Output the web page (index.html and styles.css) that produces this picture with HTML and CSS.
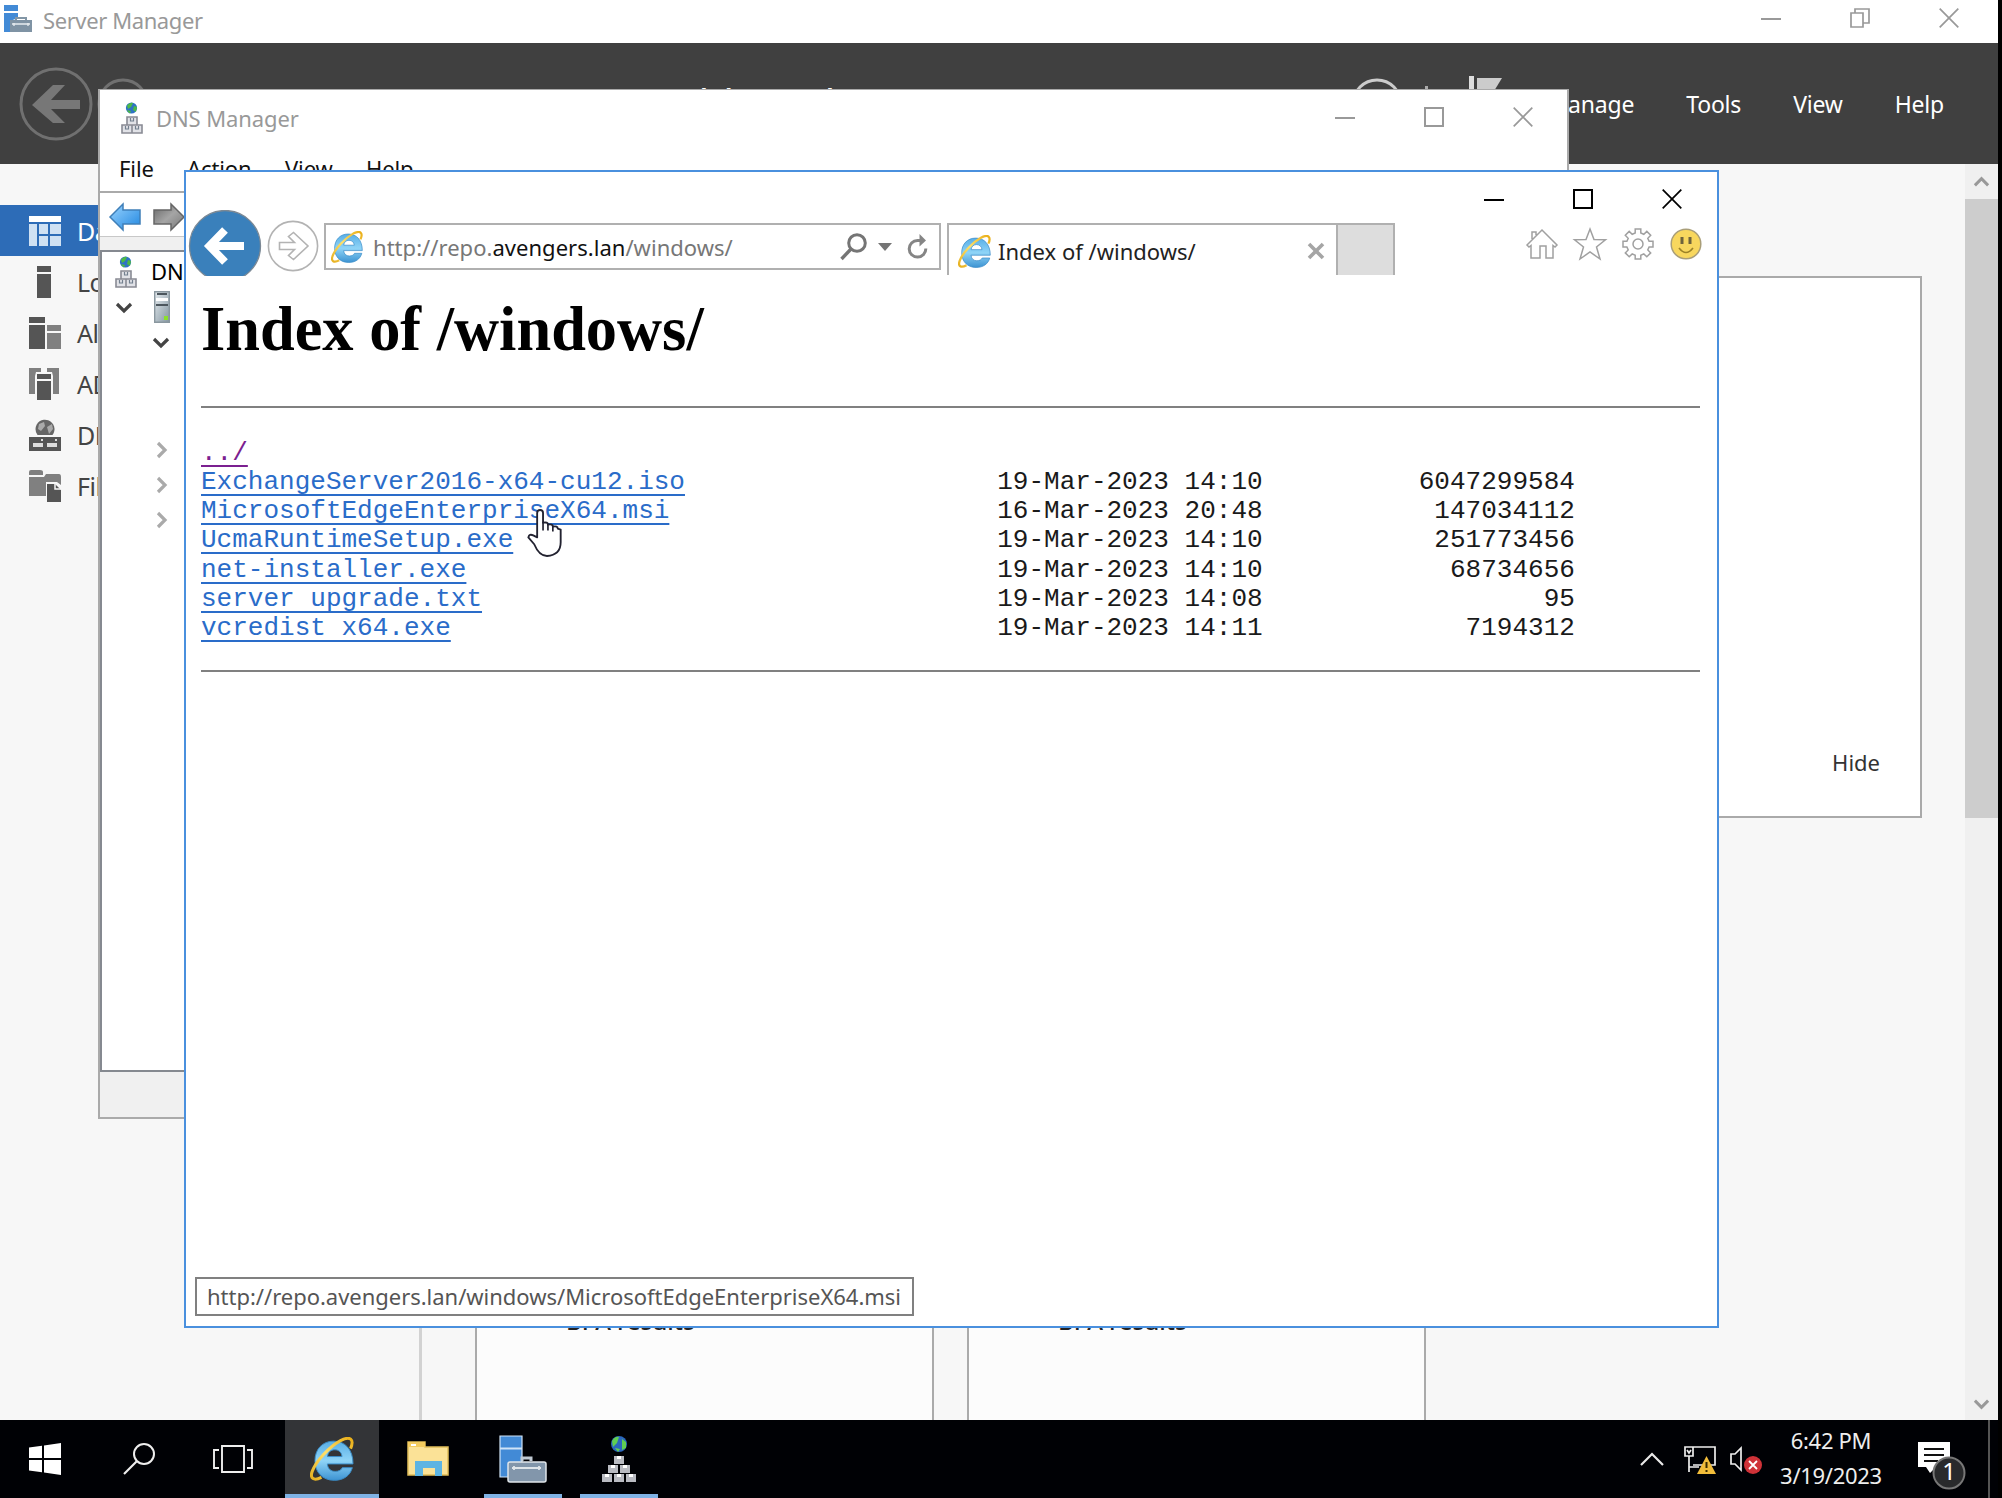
FILE: index.html
```html
<!DOCTYPE html>
<html lang="en">
<head>
<meta charset="utf-8">
<title>Index of /windows/</title>
<link rel="stylesheet" href="styles.css">
</head>
<body>
<svg class="defs" width="0" height="0" aria-hidden="true">
  <defs>
    <linearGradient id="ieBlue" x1="0" y1="0" x2="0" y2="1"><stop offset="0" stop-color="#58aee6"/><stop offset=".5" stop-color="#8fd4f7"/><stop offset="1" stop-color="#3d93d2"/></linearGradient>
    <linearGradient id="ieGold" x1="0" y1="1" x2="1" y2="0"><stop offset="0" stop-color="#e6b020"/><stop offset=".5" stop-color="#ffe06a"/><stop offset="1" stop-color="#e9ae18"/></linearGradient>
    <linearGradient id="arrowBlue" x1="0" y1="0" x2="1" y2="1"><stop offset="0" stop-color="#9ad4ff"/><stop offset="1" stop-color="#2187e0"/></linearGradient>
    <linearGradient id="arrowGray" x1="0" y1="0" x2="1" y2="1"><stop offset="0" stop-color="#666"/><stop offset=".5" stop-color="#a5a5a5"/><stop offset="1" stop-color="#777"/></linearGradient>
    <linearGradient id="tower" x1="0" y1="0" x2="1" y2="1"><stop offset="0" stop-color="#e5ebef"/><stop offset="1" stop-color="#8496a1"/></linearGradient>
  </defs>
  <symbol id="ie" viewBox="0 0 32 32">
    <path fill-rule="evenodd" d="M17.200 3C25.500 3 31.300 9 31.300 19.600H12.600C13 23.200 15.200 25 18.300 25c2.600 0 4.300-.9 5.200-2.700h7.300C29.200 28.200 24.300 31.500 17.600 31.500 9.200 31.500 3.600 25.700 3.600 17.300S9 3 17.200 3zM12.700 14.200h10.600C22.900 11 20.900 9.300 18 9.300s-4.900 1.700-5.300 4.900z" fill="url(#ieBlue)" stroke="#3a8cc8" stroke-width=".7"/>
    <path d="M29.500 8.400C32.400 1.500 29.300-1 22.200 2.600 13.800 7.200 4.400 17.600 1.600 25-.3 30.400 2.900 32.100 8.300 29.300" fill="none" stroke="url(#ieGold)" stroke-width="2.200"/>
  </symbol>
  <symbol id="dns" viewBox="0 0 22 32">
    <circle cx="10.500" cy="6" r="5.600" fill="#2f73c4"/>
    <path d="M6 3.500Q9 0 12 1l-2 4-3 2zM13 4l3 1-1 5-3-2zM6 8l4 1-1 2.500Q7 11 6 8z" fill="#4dba45"/>
    <path d="M6 15h10v8H6zM1 23h10v8H1zM11 23h10v8H11z" fill="#e1e2e7" stroke="#898b94" stroke-width="1.600"/>
    <path d="M9.500 16v3h3v-3M4.500 24v3h3v-3M14.500 24v3h3v-3" fill="none" stroke="#73808f" stroke-width="1.200"/>
  </symbol>
  <symbol id="toolbox" viewBox="0 0 48 48">
    <path d="M1 1h22v12H1zM1 14h22v28H1z" fill="#428ad6" stroke="#cfe3f7" stroke-width="1.200"/>
    <path d="M23 26v-3h9v3" fill="none" stroke="#bfc9d3" stroke-width="3"/>
    <rect x="9" y="27" width="38" height="20" rx="2" fill="#8296ab" stroke="#dfe5ea" stroke-width="1.500"/>
    <path d="M13 33h29M15 31v4M40 31v4" stroke="#dfe5ea" stroke-width="1.800"/>
  </symbol>
  <symbol id="close" viewBox="0 0 20 20"><path d="M.7.7l18.600 18.600M19.300.7L.7 19.300" fill="none" stroke="currentColor" stroke-width="1.700"/></symbol>
  <symbol id="max" viewBox="0 0 20 20"><path d="M1 1h18v18H1z" fill="none" stroke="currentColor" stroke-width="2"/></symbol>
  <symbol id="min" viewBox="0 0 20 20"><path d="M0 11h20" stroke="currentColor" stroke-width="2"/></symbol>
  <symbol id="chevron" viewBox="0 0 18 18"><path d="M2 6l7 7 7-7" fill="none" stroke="currentColor" stroke-width="3.200"/></symbol>
</svg>

<main class="desktop">
  <section class="server-manager">
    <header class="sm-title">
      <svg class="sm-logo" viewBox="0 0 28 28"><path d="M0 0h14v6H0zM0 8h14v5l-8 3v11H0z" fill="#428ad6"/><path d="M12 15v-2h10v2" fill="none" stroke="#8296a6" stroke-width="2"/><path d="M6 15h22v12H6z" fill="#7f93a4"/><path d="M8 19h18M10 18v3M24 18v3" stroke="#e8edf0" stroke-width="1.300"/></svg>
      <span class="sm-name">Server Manager</span>
      <div class="controls">
        <svg><use href="#min"/></svg>
        <svg viewBox="0 0 20 20"><path d="M1 5h12v14H1zM5 5V1h14v14h-6" fill="none" stroke="currentColor" stroke-width="1.700"/></svg>
        <svg><use href="#close"/></svg>
      </div>
    </header>
    <div class="sm-header">
      <svg class="sm-back" viewBox="0 0 74 74"><circle cx="37" cy="37" r="35" fill="none" stroke="#707070" stroke-width="3"/><path d="M13 38L34 18h12L32 33h29v9H32l14 14H34z" fill="#777"/></svg>
      <svg class="sm-forward" viewBox="0 0 52 52"><circle cx="26" cy="26" r="24" fill="none" stroke="#707070" stroke-width="3"/></svg>
      <span class="sm-crumb">Dashboard</span>
      <svg class="sm-refresh" viewBox="0 0 52 52"><circle cx="26" cy="26" r="24" fill="none" stroke="#ccc" stroke-width="3"/></svg>
      <span class="sm-divider"></span>
      <svg class="sm-flag" viewBox="0 0 34 56"><path d="M0 0h5v56H0z" fill="#ddd"/><path d="M8 2h25L22 20H8z" fill="#ccc"/></svg>
      <nav class="sm-menu"><span>Manage</span><span>Tools</span><span>View</span><span>Help</span></nav>
    </div>
    <div class="sm-body">
      <nav class="sidebar">
        <div class="side-item selected"><svg viewBox="0 0 32 32"><path d="M0 1h32v6H0z" fill="#fff"/><path d="M0 9h8v22H0zM10 9h9v10h-9zM21 9h11v10H21zM10 21h9v10h-9zM21 21h11v10H21z" fill="#cfe1f3"/></svg><span>Dashboard</span></div>
        <div class="side-item"><svg viewBox="0 0 32 32"><path d="M8 0h14v6H8zM8 8h14v24H8z" fill="#555"/></svg><span>Local Server</span></div>
        <div class="side-item"><svg viewBox="0 0 32 32"><path d="M0 0h16v6H0zM0 8h16v24H0z" fill="#555"/><path d="M18 8h14v6H18zM18 16h14v16H18z" fill="#808080"/></svg><span>All Servers</span></div>
        <div class="side-item"><svg viewBox="0 0 32 32"><path d="M0 0h12v4H7l-1 4v18H0zM18 0h12v26h-6V8l-1-4h-5z" fill="#808080"/><path d="M8 6h14v5H8zM8 13h14v19H8z" fill="#555"/></svg><span>AD DS</span></div>
        <div class="side-item"><svg viewBox="0 0 32 32"><path d="M6.500 10a9.500 9.500 0 1 1 17 6h-15a9.500 9.500 0 0 1-2-6z" fill="#666"/><path d="M10 5l5-2 1 4-4 5-3-2zM18 8l5-3 1 5-4 5z" fill="#aaa"/><path d="M0 18h32v14H0z" fill="#555"/><path d="M4 24h10v4H4zM18 24h10v4H18zM12 20h2v2h-2zM26 20h2v2h-2z" fill="#ddd"/></svg><span>DNS</span></div>
        <div class="side-item"><svg viewBox="0 0 32 32"><path d="M0 5V2q0-2 2-2h9q3 0 3 2v3zM0 7h15l2-3h13q2 0 2 3v8l-4-3H17v14H0z" fill="#808080"/><path d="M18 14h8l6 6v12H18z" fill="#555"/><path d="M26 13v6h6" fill="none" stroke="#f7f7f7" stroke-width="1.500"/></svg><span>File and Storage Services</span></div>
      </nav>
      <div class="sm-content">
        <div class="welcome"><span>Hide</span></div>
        <div class="tiles">
          <div class="tile">BPA results</div>
          <div class="tile">BPA results</div>
        </div>
      </div>
      <div class="scrollbar">
        <svg class="flip" viewBox="0 0 18 18"><use href="#chevron"/></svg>
        <div class="thumb"></div>
        <svg viewBox="0 0 18 18"><use href="#chevron"/></svg>
      </div>
    </div>
  </section>

  <section class="dns-window">
    <header class="dns-title">
      <svg class="dns-icon"><use href="#dns"/></svg>
      <span class="dns-name">DNS Manager</span>
      <div class="controls">
        <svg><use href="#min"/></svg><svg><use href="#max"/></svg><svg><use href="#close"/></svg>
      </div>
    </header>
    <nav class="dns-menu"><span class="m-file">File</span><span class="m-action">Action</span><span class="m-view">View</span><span>Help</span></nav>
    <div class="dns-tools">
      <svg viewBox="0 0 32 28"><path d="M1 14L14 1v6h17v14H14v6z" fill="url(#arrowBlue)" stroke="#3f7fb8" stroke-width="1.500"/></svg>
      <svg viewBox="0 0 32 28"><path d="M31 14L18 1v6H1v14h17v6z" fill="url(#arrowGray)" stroke="#666" stroke-width="1.500"/></svg>
    </div>
    <div class="dns-tree">
      <div class="tree-row root"><svg class="dns-icon"><use href="#dns"/></svg><span>DNS</span></div>
      <div class="tree-row host"><svg class="chev"><use href="#chevron"/></svg><svg class="tower" viewBox="0 0 16 32"><path d="M.7.7h14.600v30.600H.7z" fill="url(#tower)" stroke="#8a979f" stroke-width="1.400"/><path d="M3 3h10M2 14h12" stroke="#4c565d" stroke-width="2"/><path d="M2 8.500h12" stroke="#fff" stroke-width="3"/><path d="M10 25h4v4h-4z" fill="#8be02c"/></svg></div>
      <div class="tree-row zone"><svg class="chev"><use href="#chevron"/></svg></div>
      <div class="tree-row leaf first"><svg class="chev"><use href="#chevron"/></svg></div>
      <div class="tree-row leaf"><svg class="chev"><use href="#chevron"/></svg></div>
      <div class="tree-row leaf"><svg class="chev"><use href="#chevron"/></svg></div>
    </div>
  </section>

  <section class="browser">
    <header class="browser-title">
      <div class="controls">
        <svg><use href="#min"/></svg><svg><use href="#max"/></svg><svg><use href="#close"/></svg>
      </div>
    </header>
    <div class="browser-bar">
      <svg class="back" viewBox="0 0 74 66"><circle cx="37" cy="36" r="35.500" fill="#3a80bb" stroke="#7b8894" stroke-width="1.300"/><path d="M56 36H22M37 20L21.500 36 37 52" fill="none" stroke="#fff" stroke-width="8"/></svg>
      <svg class="forward" viewBox="0 0 52 52"><circle cx="26" cy="26" r="24.600" fill="#fff" stroke="#b3b3b3" stroke-width="1.600"/><path d="M12.500 22.500h15l-6-6 5-4L41 26 26.500 39.500l-5-4 6-6h-15z" fill="none" stroke="#b3b3b3" stroke-width="1.600"/></svg>
      <div class="address">
        <svg class="ie"><use href="#ie"/></svg>
        <span class="url">http://repo.<b>avengers.lan</b>/windows/</span>
        <svg class="search" viewBox="0 0 28 28"><circle cx="17" cy="10" r="8.300" fill="none" stroke="#757575" stroke-width="3"/><path d="M11 16L1.500 26" stroke="#757575" stroke-width="3.400"/></svg>
        <svg class="drop" viewBox="0 0 14 8"><path d="M0 0h14L7 8z" fill="#757575"/></svg>
        <svg class="reload" viewBox="0 0 22 26"><path d="M18.800 14.500A8.300 8.300 0 1 1 10.500 6.500H14" fill="none" stroke="#858585" stroke-width="3"/><path d="M12.500 0l6.500 6.500-6.500 6z" fill="#858585"/></svg>
      </div>
      <div class="tab">
        <svg class="ie"><use href="#ie"/></svg>
        <span>Index of /windows/</span>
        <svg class="tab-close" viewBox="0 0 18 18"><path d="M2 2l14 14M16 2L2 16" stroke="#a5a5a5" stroke-width="3.600"/></svg>
      </div>
      <div class="new-tab"></div>
      <div class="tools">
        <svg viewBox="0 0 32 32"><path d="M1 17L16 2l15 15-2 2-2-1.500V30h-7V18h-6v12H5V17.500L3 19zM6 11V4h4v3" fill="none" stroke="#a0a0a0" stroke-width="1.500"/></svg>
        <svg viewBox="0 0 32 32"><path d="M16 1l4 10.500 11.500.3-9 7.200L26 31l-10-7-10 7 3.500-12L.5 11.800l11.500-.3z" fill="none" stroke="#a0a0a0" stroke-width="1.500"/></svg>
        <svg viewBox="0 0 32 32"><path d="M13.200 1h5.600v4l3 1.300 3-2.900 3.900 3.900-2.900 3 1.300 3H31v5.600h-3.900l-1.300 3 2.900 3-3.900 3.900-3-2.900-3 1.300V31h-5.600v-3.800l-3-1.300-3 2.900-3.900-3.900 2.900-3-1.300-3H1v-5.600h3.900l1.300-3-2.900-3 3.900-3.900 3 2.900 3-1.300z" fill="none" stroke="#a0a0a0" stroke-width="1.500"/><circle cx="16" cy="16" r="5" fill="none" stroke="#a0a0a0" stroke-width="1.500"/></svg>
        <svg viewBox="0 0 32 32"><circle cx="16" cy="16" r="14.800" fill="#f8d75e" stroke="#a99e79" stroke-width="1.500"/><path d="M12 9v7M20 9v7" stroke="#6e633c" stroke-width="3"/><path d="M9 20q7 9 14 0" fill="none" stroke="#9c8228" stroke-width="1.600"/></svg>
      </div>
    </div>
    <article class="page">
      <h1>Index of /windows/</h1>
      <hr>
<pre><a class="visited">../</a>
<a>ExchangeServer2016-x64-cu12.iso</a>                    19-Mar-2023 14:10          6047299584
<a>MicrosoftEdgeEnterpriseX64.msi</a>                     16-Mar-2023 20:48           147034112
<a>UcmaRuntimeSetup.exe</a>                               19-Mar-2023 14:10           251773456
<a>net-installer.exe</a>                                  19-Mar-2023 14:10            68734656
<a>server upgrade.txt</a>                                 19-Mar-2023 14:08                  95
<a>vcredist x64.exe</a>                                   19-Mar-2023 14:11             7194312
</pre>
      <hr>
    </article>
    <div class="status">http://repo.avengers.lan/windows/MicrosoftEdgeEnterpriseX64.msi</div>
  </section>

  <svg class="cursor" viewBox="0 0 36 50"><path d="M10 30V5q0-3 3-3t3 3v10q5-1 5 2 5-1 5 2 5-1 5 2l3 1v13q0 13-14 14-8 0-13-12L1 30q1-4 5-2z" fill="#fff" stroke="#222230" stroke-width="1.900" stroke-linejoin="round"/><path d="M16 14v9M21 16v7M26 18v6" stroke="#222230" stroke-width="1.700"/></svg>

  <footer class="taskbar">
    <div class="task"><svg class="win" viewBox="0 0 32 32"><path d="M0 4.500L13 2.700V15H0zM15 2.400L32 0v15H15zM0 17h13v12.300L0 27.500zM15 17h17v15l-17-2.400z" fill="#fff"/></svg></div>
    <div class="task"><svg class="find" viewBox="0 0 32 32"><circle cx="21" cy="11" r="10" fill="none" stroke="#eee" stroke-width="2"/><path d="M14 18L1 31" stroke="#eee" stroke-width="2.200"/></svg></div>
    <div class="task"><svg class="view" viewBox="0 0 40 28"><path d="M9 1h22v26H9zM6 5H1v18h5M34 5h5v18h-5" fill="none" stroke="#eee" stroke-width="1.900"/></svg></div>
    <div class="task active"><svg class="big-ie"><use href="#ie"/></svg></div>
    <div class="task"><svg class="folder" viewBox="0 0 42 36"><path d="M1 1h17v5h23v28H1z" fill="#fbe297" stroke="#e0bd5a" stroke-width="1.500"/><path d="M1 1h17v5H1z" fill="#f3cb5f"/><path d="M4 3h5v2H4z" fill="#fff"/><path d="M8 20h27v15h-7v-8H16v8H8z" fill="#5db4e3"/></svg></div>
    <div class="task running"><svg class="kit"><use href="#toolbox"/></svg></div>
    <div class="task running"><svg class="pyramid" viewBox="0 0 36 46"><circle cx="18" cy="8" r="8" fill="#2b67bd"/><path d="M11 5q3-5 7-4l-2 6-4 4zM21 3l4 3v6l-4 2zM14 12l5 1-2 3z" fill="#60cf51"/><path d="M13 20h10v8H13zM7 29h10v8H7zM19 29h10v8H19zM1 38h10v8H1zM13 38h10v8H13zM25 38h10v8H25z" fill="#b9bbc2"/><path d="M16 20v3h4v-3M10 29v3h4v-3M22 29v3h4v-3M4 38v3h4v-3M16 38v3h4v-3M28 38v3h4v-3" fill="#fff"/></svg></div>
    <div class="tray">
      <svg class="up" viewBox="0 0 24 14"><path d="M1 13L12 2l11 11" fill="none" stroke="#e8e8e8" stroke-width="2.200"/></svg>
      <svg class="net" viewBox="0 0 32 28"><path d="M9 1h22v18H9M1 1h8v9H1zM5 10v16M5 21h10M3 4l2 3 2-3" fill="none" stroke="#eee" stroke-width="1.700"/><path d="M22.500 10L32 28H13z" fill="#f2bd3a"/><path d="M22.500 16v6M22.500 24v2" stroke="#3a2c00" stroke-width="2"/></svg>
      <svg class="vol" viewBox="0 0 32 28"><path d="M1 8h4l6-6v22l-6-6H1z" fill="none" stroke="#eee" stroke-width="1.700"/><circle cx="23" cy="19" r="9" fill="#cf3238"/><path d="M19 15l8 8M27 15l-8 8" stroke="#fff" stroke-width="1.800"/></svg>
      <div class="clock"><span>6:42 PM</span><span>3/19/2023</span></div>
      <div class="notice">
        <svg viewBox="0 0 48 48"><path d="M0 0h32v25H18l-6 6-4-6H0z" fill="#fff"/><path d="M6 7h20M6 13h20M6 19h14" stroke="#111" stroke-width="2"/><circle cx="31" cy="31" r="15.500" fill="#292a2c" stroke="#777" stroke-width="2"/></svg>
        <span>1</span>
      </div>
    </div>
  </footer>
</main>
</body>
</html>
```
FILE: styles.css
```css
* { box-sizing: border-box; }

body {
  margin: 0;
  background: #000;
  font-family: "Noto Sans", "Open Sans", sans-serif;
  font-size: 22px;
  overflow: hidden;
}

svg { display: block; flex: none; overflow: visible; }
.defs { position: absolute; }

.desktop {
  position: relative;
  width: 2002px;
  height: 1498px;
  overflow: hidden;
  white-space: nowrap;
}

.controls { display: flex; gap: 69px; margin-left: auto; color: #999; }
.controls svg { width: 20px; height: 20px; }

/* Server Manager */
.server-manager {
  position: absolute;
  left: 0;
  top: 0;
  width: 1998px;
  height: 1420px;
  display: flex;
  flex-direction: column;
  background: #f7f7f7;
}
.sm-title {
  height: 43px;
  display: flex;
  align-items: flex-start;
  padding: 5px 39px 0 4px;
  background: #fff;
}
.sm-logo { width: 28px; height: 28px; }
.sm-name { margin-left: 11px; line-height: 31px; color: #999; letter-spacing: -0.4px; }
.sm-title .controls { padding-top: 3px; }
.sm-header {
  height: 121px;
  display: flex;
  align-items: center;
  background: #404040;
  padding: 0 54px 0 19px;
}
.sm-back { width: 74px; height: 74px; }
.sm-forward { width: 52px; height: 52px; margin-left: 4px; }
.sm-crumb { width: 723px; margin: 0 0 1px 479px; font-size: 40px; line-height: 54px; color: #fff; }
.sm-refresh { width: 52px; height: 52px; }
.sm-divider { width: 3px; height: 36px; margin-left: 22px; background: #aaa; }
.sm-flag { width: 34px; height: 56px; margin-left: 41px; }
.sm-menu { display: flex; gap: 52px; margin-left: auto; padding-top: 1px; color: #fff; font-size: 23px; }
.sm-menu span { letter-spacing: -0.2px; }
.sm-body { flex: 1; display: flex; min-height: 0; }

.sidebar { width: 422px; padding-top: 41px; border-right: 3px solid #d2d2d2; }
.side-item {
  height: 51px;
  display: flex;
  align-items: center;
  gap: 16px;
  padding-left: 29px;
  font-size: 25px;
  letter-spacing: -0.5px;
  color: #444;
}
.side-item svg { width: 32px; height: 32px; }
.side-item.selected { background: #2d6cb7; color: #fff; }

.sm-content { flex: 1; display: flex; flex-direction: column; padding: 112px 43px 0 53px; }
.welcome {
  height: 542px;
  display: flex;
  justify-content: flex-end;
  align-items: flex-end;
  padding: 0 40px 39px;
  background: #fff;
  border: 2px solid #aaa;
  color: #333;
}
.tiles { flex: 1; display: flex; gap: 33px; padding-top: 480px; }
.tile {
  width: 459px;
  padding: 0 0 0 89px;
  background: #fcfcfc;
  border: solid #aaa;
  border-width: 0 2px;
  line-height: 46px;
  font-size: 24px;
  font-weight: 500;
  color: #222;
}

.scrollbar {
  width: 33px;
  display: flex;
  flex-direction: column;
  align-items: center;
  padding: 10px 0 8px;
  background: #f0f0f0;
  color: #999;
}
.scrollbar svg { width: 17px; height: 17px; }
.scrollbar svg:last-child { margin-top: auto; }
.flip { transform: scaleY(-1); }
.thumb { width: 33px; height: 619px; margin-top: 8px; background: #cdcdcd; }

/* DNS Manager */
.dns-window {
  position: absolute;
  left: 98px;
  top: 89px;
  width: 1471px;
  height: 1030px;
  display: flex;
  flex-direction: column;
  padding-bottom: 45px;
  background: #f0f0f0;
  border: 2px solid #aaa;
  border-top-width: 1px;
}
.dns-title {
  height: 60px;
  display: flex;
  align-items: flex-start;
  padding: 12px 34px 0 21px;
  background: #fff;
}
.dns-icon { width: 22px; height: 32px; }
.dns-name { margin-left: 13px; line-height: 33px; color: #999; letter-spacing: -0.1px; }
.dns-title .controls { padding-top: 5px; }
.dns-menu {
  height: 43px;
  display: flex;
  padding-left: 19px;
  background: #fff;
  border-bottom: 2px solid #aaa;
  line-height: 37px;
  color: #111;
  letter-spacing: -0.1px;
}
.m-file { width: 68px; }
.m-action { width: 98px; }
.m-view { width: 81px; }
.dns-tools {
  height: 44px;
  display: flex;
  align-items: center;
  gap: 12px;
  padding: 4px 0 0 9px;
  background: #fff;
  border-bottom: 1px solid #c8c8c8;
}
.dns-tools svg { width: 32px; height: 28px; }
.dns-tree {
  flex: 1;
  margin-top: 13px;
  background: #fff;
  border: 2px solid #858990;
}
.tree-row { display: flex; align-items: center; height: 35px; }
.tree-row.root { gap: 14px; padding: 2px 0 0 13px; height: 37px; }
.tree-row.root span { padding-bottom: 2px; }
.tree-row.host { gap: 21px; padding-left: 13px; }
.tree-row.zone { padding-left: 50px; }
.tree-row.first { margin-top: 73px; }
.tree-row.leaf { padding-left: 50px; }
.chev { width: 18px; height: 18px; color: #444; }
.leaf .chev { color: #aaa; transform: rotate(-90deg); }
.tower { width: 16px; height: 32px; }

/* Browser */
.browser {
  position: absolute;
  left: 184px;
  top: 170px;
  width: 1535px;
  height: 1158px;
  display: flex;
  flex-direction: column;
  background: #fff;
  border: 2px solid #4a90de;
}
.browser-title { display: flex; height: 38px; padding: 17px 35px 0 0; }
.browser-title .controls { color: #000; }
.browser-bar { height: 65px; display: flex; align-items: flex-start; }
.back { width: 74px; height: 66px; margin-left: 2px; overflow: hidden; }
.forward { width: 52px; height: 52px; margin: 10px 0 0 5px; }
.address {
  width: 617px;
  height: 47px;
  margin: 13px 0 0 5px;
  display: flex;
  align-items: center;
  border: 2px solid #b0b0b0;
  padding: 0 10px 0 5px;
}
.address .ie { width: 32px; height: 32px; }
.url { margin-left: 10px; color: #777; letter-spacing: 0.03px; }
.url b { font-weight: 400; color: #111; }
.search { width: 28px; height: 28px; margin-left: auto; }
.drop { width: 14px; height: 8px; margin-left: 10px; }
.reload { width: 22px; height: 26px; margin-left: 15px; }
.tab {
  width: 391px;
  height: 52px;
  margin: 13px 0 0 6px;
  display: flex;
  align-items: center;
  padding: 2px 11px 0 9px;
  border: 2px solid #b0b0b0;
  border-bottom: 0;
  color: #222;
}
.tab .ie { width: 33px; height: 33px; margin-right: 7px; }
.tab-close { width: 18px; height: 18px; margin-left: auto; }
.new-tab {
  width: 57px;
  height: 52px;
  margin-top: 13px;
  background: #ddd;
  border: 2px solid #b0b0b0;
  border-width: 2px 2px 0 0;
}
.tools { display: flex; gap: 16px; margin: 18px 15px 0 auto; }
.tools svg { width: 32px; height: 32px; }

.page { padding: 0 17px 0 15px; }
h1 {
  margin: 19px 0 42px;
  font: bold 62.4px/70px "Liberation Serif", serif;
}
hr { height: 2px; margin: 0; border: 0; background: #808080; }
pre {
  margin: 30.5px 0 26px;
  font: 26.03px/29.33px "Liberation Mono", monospace;
  color: #1a1a1a;
}
pre a {
  color: #2a6cc9;
  text-decoration: underline 2px;
  text-underline-offset: 5px;
  text-decoration-skip-ink: none;
}
pre a.visited { color: #7b2090; }

.status {
  align-self: flex-start;
  height: 39px;
  margin: auto 0 10px 9px;
  padding: 0 11px 0 10px;
  border: 2px solid #808080;
  line-height: 34px;
  letter-spacing: -0.02px;
  color: #555;
}

.cursor { position: absolute; left: 527px; top: 508px; width: 36px; height: 49px; }

/* Taskbar */
.taskbar {
  position: absolute;
  left: 0;
  bottom: 0;
  width: 1998px;
  height: 78px;
  display: flex;
  padding-right: 8px;
  background: #000105;
}
.task { width: 95px; display: flex; justify-content: center; align-items: center; }
.task:nth-child(1) { width: 90px; }
.task:nth-child(2) { width: 97px; }
.task:nth-child(3) { width: 98px; padding-right: 6px; }
.task.active { width: 94px; padding-top: 3px; background: #333437; border-bottom: 4px solid #7fb2e5; }
.task:nth-child(5) { width: 97px; margin-right: 8px; }
.task.running { width: 78px; padding-top: 4px; margin-right: 18px; border-bottom: 4px solid #7fb2e5; }
.win, .find { width: 32px; height: 32px; }
.view { width: 40px; height: 28px; }
.big-ie { width: 44px; height: 44px; }
.folder { width: 42px; height: 36px; }
.kit { width: 48px; height: 48px; }
.pyramid { width: 36px; height: 46px; }
.tray {
  margin-left: auto;
  display: flex;
  align-items: center;
  height: 78px;
  padding-right: 22px;
  border-right: 2px solid #555;
  color: #eee;
}
.up { width: 24px; height: 14px; margin-right: 20px; }
.net { width: 32px; height: 28px; margin: 2px 14px 0 0; }
.vol { width: 32px; height: 28px; margin-top: 2px; }
.clock {
  width: 104px;
  margin: 0 35px 0 17px;
  display: flex;
  flex-direction: column;
  align-items: center;
  line-height: 35px;
  padding-bottom: 3px;
  letter-spacing: -0.3px;
}
.notice { position: relative; width: 48px; height: 48px; margin-top: 14px; }
.notice svg { width: 48px; height: 48px; }
.notice span { position: absolute; left: 24px; top: 13px; width: 14px; text-align: center; line-height: 32px; font-size: 24px; color: #fff; }
```
